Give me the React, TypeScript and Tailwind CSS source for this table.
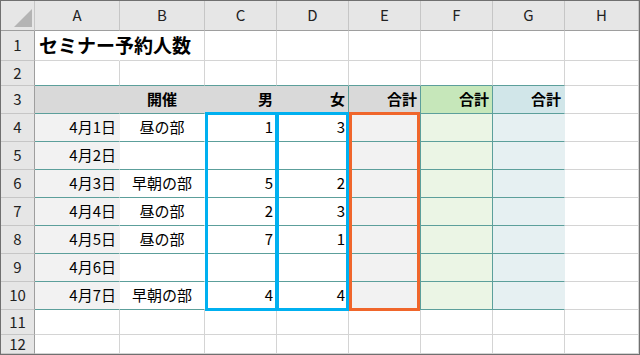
import React from "react";

const COLS = [34, 85, 85, 72, 72, 72, 72, 72, 74];
const LETTERS = ["A", "B", "C", "D", "E", "F", "G", "H"];
const TEAL = "#5c9f9b";
const GRID = "#d4d4d4";

type Align = "left" | "center" | "right";

type CellSpec = {
  text?: string;
  bg?: string;
  br?: string;
  bb?: string;
  align?: Align;
  bold?: boolean;
};

const rowsData: [string, string, string, string][] = [
  ["4月1日", "昼の部", "1", "3"],
  ["4月2日", "", "", ""],
  ["4月3日", "早朝の部", "5", "2"],
  ["4月4日", "昼の部", "2", "3"],
  ["4月5日", "昼の部", "7", "1"],
  ["4月6日", "", "", ""],
  ["4月7日", "早朝の部", "4", "4"],
];

function Cell({ spec, width, height }: { spec: CellSpec; width: number; height: number }) {
  const justify =
    spec.align === "right" ? "justify-end pr-[3px]" : spec.align === "center" ? "justify-center" : "justify-start pl-[4px]";
  return (
    <div
      className={`flex items-center shrink-0 whitespace-nowrap border-r border-b text-[15px] text-black ${justify} ${
        spec.bold ? "font-bold" : "font-normal"
      }`}
      style={{
        width,
        height,
        background: spec.bg ?? "#ffffff",
        borderRightColor: spec.br ?? GRID,
        borderBottomColor: spec.bb ?? GRID,
      }}
    >
      {spec.text}
    </div>
  );
}

function RowHead({ n, height }: { n: number; height: number }) {
  return (
    <div
      className="flex items-center justify-center shrink-0 bg-[#e6e6e6] border-r border-b border-r-[#9e9e9e] border-b-[#c6c6c6] text-[15px] text-[#222]"
      style={{ width: COLS[0], height }}
    >
      {n}
    </div>
  );
}

function buildRow(r: number): CellSpec[] {
  if (r === 2) {
    return LETTERS.map((_, i) => ({ bb: i < 7 ? TEAL : GRID }));
  }
  if (r === 3) {
    const hdr = "#d9d9d9";
    return [
      { bg: hdr, br: hdr, bb: TEAL },
      { bg: hdr, br: hdr, bb: TEAL, text: "開催", align: "center", bold: true },
      { bg: hdr, br: hdr, bb: TEAL, text: "男", align: "right", bold: true },
      { bg: hdr, br: TEAL, bb: TEAL, text: "女", align: "right", bold: true },
      { bg: hdr, br: TEAL, bb: TEAL, text: "合計", align: "right", bold: true },
      { bg: "#c6e7ba", br: TEAL, bb: TEAL, text: "合計", align: "right", bold: true },
      { bg: "#d1e6e9", br: "#d1e6e9", bb: TEAL, text: "合計", align: "right", bold: true },
      {},
    ];
  }
  if (r >= 4 && r <= 10) {
    const [d, s, m, f] = rowsData[r - 4];
    return [
      { bg: "#f2f2f2", br: "#f2f2f2", bb: TEAL, text: d, align: "right" },
      { br: "#ffffff", bb: TEAL, text: s, align: "center" },
      { br: TEAL, bb: TEAL, text: m, align: "right" },
      { br: TEAL, bb: TEAL, text: f, align: "right" },
      { bg: "#f2f2f2", br: TEAL, bb: TEAL },
      { bg: "#ebf5e5", br: TEAL, bb: TEAL },
      { bg: "#e6f0f2", br: "#e6f0f2", bb: TEAL },
      {},
    ];
  }
  return LETTERS.map(() => ({}));
}

const HEIGHTS = [30, 25, 28, 28, 28, 28, 28, 28, 28, 28, 25, 19];

export default function App() {
  return (
    <div
      className="relative w-[640px] h-[355px] overflow-hidden border border-[#707070] bg-white"
      style={{ fontFamily: '"Noto Sans CJK JP", "Liberation Sans", sans-serif' }}
    >
      {/* column letters */}
      <div className="flex">
        <div className="relative shrink-0 h-[30px] bg-[#e6e6e6] border-r border-b border-r-[#c6c6c6] border-b-[#9e9e9e]" style={{ width: COLS[0] }}>
          <svg className="absolute left-0 top-0" width="33" height="29" viewBox="0 0 33 29">
            <polygon points="13,26 31,26 31,8" fill="#b4b4b4" />
          </svg>
        </div>
        {LETTERS.map((l, i) => (
          <div
            key={l}
            className="flex items-center justify-center shrink-0 h-[30px] bg-[#e6e6e6] border-r border-b border-r-[#c6c6c6] border-b-[#9e9e9e] text-[15px] text-[#222]"
            style={{ width: COLS[i + 1] }}
          >
            {l}
          </div>
        ))}
      </div>

      {HEIGHTS.map((h, idx) => {
        const r = idx + 1;
        const cells = buildRow(r);
        return (
          <div key={r} className="flex">
            <RowHead n={r} height={h} />
            {cells.map((c, i) =>
              r === 1 && i === 0 ? (
                <div
                  key={i}
                  className="flex items-center shrink-0 whitespace-nowrap overflow-visible border-r border-b border-r-white border-b-[#d4d4d4] pl-[4px] text-[19px] font-bold text-black relative z-10"
                  style={{ width: COLS[1], height: h }}
                >
                  セミナー予約人数
                </div>
              ) : (
                <Cell key={i} spec={c} width={COLS[i + 1]} height={h} />
              )
            )}
          </div>
        );
      })}

      {/* highlight frames */}
      <div className="absolute left-[204px] top-[111px] w-[73px] h-[199px] border-[3px] border-[#00b0f0] pointer-events-none" />
      <div className="absolute left-[275px] top-[111px] w-[73px] h-[199px] border-[3px] border-[#00b0f0] pointer-events-none" />
      <div className="absolute left-[348px] top-[111px] w-[71px] h-[199px] border-[3px] border-[#f0662b] pointer-events-none" />
    </div>
  );
}
